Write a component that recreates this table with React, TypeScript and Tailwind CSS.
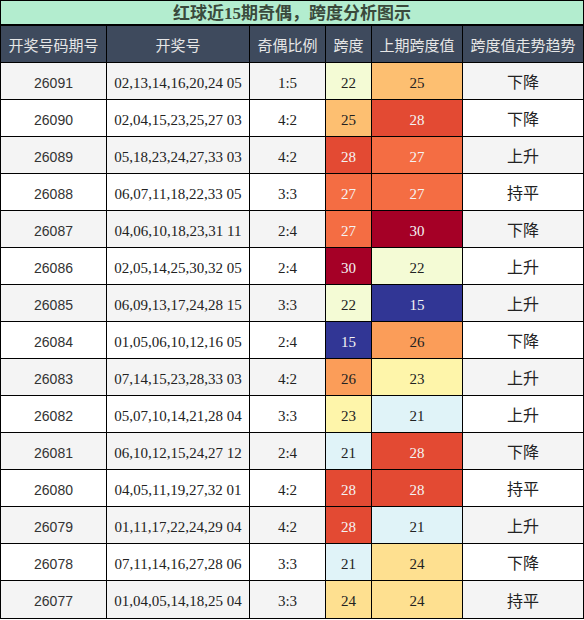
import React from 'react';

const rows: [string, string, string, number, number, string][] = [
  ['26091', '02,13,14,16,20,24 05', '1:5', 22, 25, '下降'],
  ['26090', '02,04,15,23,25,27 03', '4:2', 25, 28, '下降'],
  ['26089', '05,18,23,24,27,33 03', '4:2', 28, 27, '上升'],
  ['26088', '06,07,11,18,22,33 05', '3:3', 27, 27, '持平'],
  ['26087', '04,06,10,18,23,31 11', '2:4', 27, 30, '下降'],
  ['26086', '02,05,14,25,30,32 05', '2:4', 30, 22, '上升'],
  ['26085', '06,09,13,17,24,28 15', '3:3', 22, 15, '上升'],
  ['26084', '01,05,06,10,12,16 05', '2:4', 15, 26, '下降'],
  ['26083', '07,14,15,23,28,33 03', '4:2', 26, 23, '上升'],
  ['26082', '05,07,10,14,21,28 04', '3:3', 23, 21, '上升'],
  ['26081', '06,10,12,15,24,27 12', '2:4', 21, 28, '下降'],
  ['26080', '04,05,11,19,27,32 01', '4:2', 28, 28, '持平'],
  ['26079', '01,11,17,22,24,29 04', '4:2', 28, 21, '上升'],
  ['26078', '07,11,14,16,27,28 06', '3:3', 21, 24, '下降'],
  ['26077', '01,04,05,14,18,25 04', '3:3', 24, 24, '持平'],
];

// heat colours for span values
const heat: Record<number, string> = {
  15: 'bg-[#313695] text-[#f4f4f4]',
  21: 'bg-[#e0f3f8] text-[#222]',
  22: 'bg-[#f4fbd5] text-[#222]',
  23: 'bg-[#fef5aa] text-[#222]',
  24: 'bg-[#fee090] text-[#222]',
  25: 'bg-[#fdbf71] text-[#222]',
  26: 'bg-[#fb9d59] text-[#222]',
  27: 'bg-[#f46d43] text-[#f4f4f4]',
  28: 'bg-[#e34a33] text-[#f4f4f4]',
  30: 'bg-[#a50026] text-[#f4f4f4]',
};

const serif = "font-['Liberation_Serif',serif]";
const cjk = "font-['Liberation_Sans','Noto_Sans_CJK_SC',sans-serif]";

const widths = ['w-[106px]', 'w-[143px]', 'w-[76px]', 'w-[46px]', 'w-[91px]', 'w-[120px]'];
const headers = ['开奖号码期号', '开奖号', '奇偶比例', '跨度', '上期跨度值', '跨度值走势趋势'];

export default function App() {
  return (
    <div className="w-[584px] border border-black bg-white">
      <div className="h-[25px] pt-[3px] border-b-2 border-black bg-[#b3edcf] flex items-center justify-center text-[17px] font-bold text-[#3a4a3c]">
        <span className="font-['Liberation_Serif','Noto_Sans_CJK_SC',serif]">红球近15期奇偶，跨度分析图示</span>
      </div>
      <div className="flex h-[37px] border-b border-black bg-[#3e4a5d]">
        {headers.map((h, i) => (
          <div
            key={h}
            className={`${widths[i]} ${i < 5 ? 'border-r border-black' : ''} pt-[4px] flex items-center justify-center text-[15px] text-[#e6e6e6] ${cjk}`}
          >
            {h}
          </div>
        ))}
      </div>
      {rows.map((r, idx) => {
        const bg = idx % 2 === 0 ? 'bg-[#f4f4f4]' : 'bg-white';
        const last = idx === rows.length - 1;
        return (
          <div key={r[0]} className={`flex h-[37px] ${last ? '' : 'border-b border-black'} ${bg}`}>
            <div className="w-[106px] pt-[4px] border-r border-black flex items-center justify-center text-[14px] text-[#333] font-['Liberation_Sans',sans-serif]">
              {r[0]}
            </div>
            <div className={`w-[143px] pt-[4px] border-r border-black flex items-center justify-center text-[15px] text-[#222] ${serif}`}>
              {r[1]}
            </div>
            <div className={`w-[76px] pt-[4px] border-r border-black flex items-center justify-center text-[15px] text-[#222] ${serif}`}>
              {r[2]}
            </div>
            <div className={`w-[46px] pt-[4px] border-r border-black flex items-center justify-center text-[15px] ${serif} ${heat[r[3]]}`}>
              {r[3]}
            </div>
            <div className={`w-[91px] pt-[4px] border-r border-black flex items-center justify-center text-[15px] ${serif} ${heat[r[4]]}`}>
              {r[4]}
            </div>
            <div className={`w-[120px] pt-[4px] flex items-center justify-center text-[16px] text-[#222] ${cjk}`}>
              {r[5]}
            </div>
          </div>
        );
      })}
    </div>
  );
}
